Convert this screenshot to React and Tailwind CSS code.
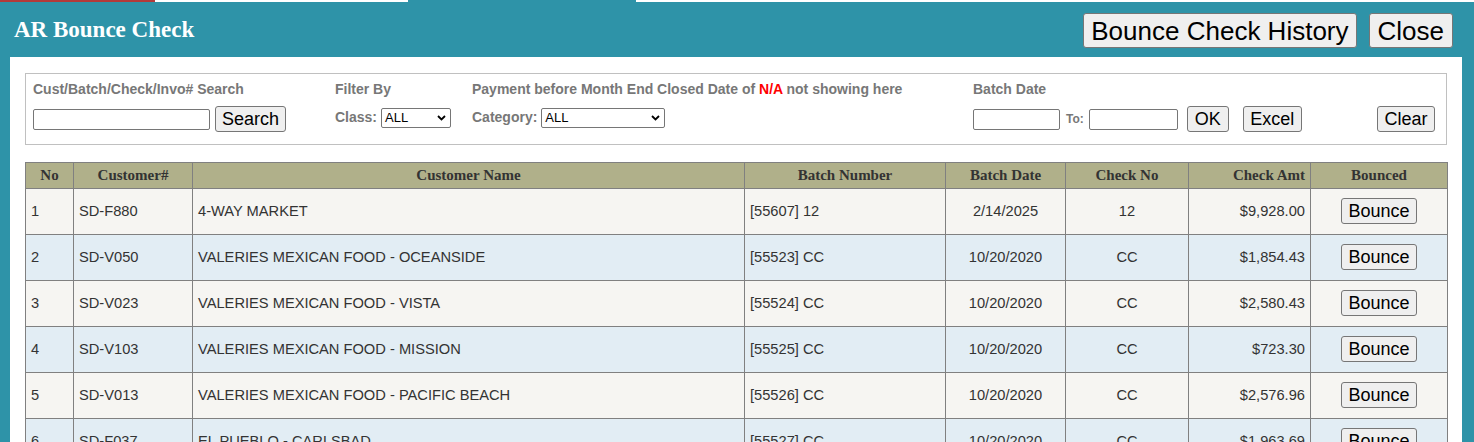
import React from "react";

const rows = [
    { no: 1, cust: "SD-F880", name: "4-WAY MARKET", batch: "[55607] 12", date: "2/14/2025", check: "12", amt: "$9,928.00" },
    { no: 2, cust: "SD-V050", name: "VALERIES MEXICAN FOOD - OCEANSIDE", batch: "[55523] CC", date: "10/20/2020", check: "CC", amt: "$1,854.43" },
    { no: 3, cust: "SD-V023", name: "VALERIES MEXICAN FOOD - VISTA", batch: "[55524] CC", date: "10/20/2020", check: "CC", amt: "$2,580.43" },
    { no: 4, cust: "SD-V103", name: "VALERIES MEXICAN FOOD - MISSION", batch: "[55525] CC", date: "10/20/2020", check: "CC", amt: "$723.30" },
    { no: 5, cust: "SD-V013", name: "VALERIES MEXICAN FOOD - PACIFIC BEACH", batch: "[55526] CC", date: "10/20/2020", check: "CC", amt: "$2,576.96" },
    { no: 6, cust: "SD-F037", name: "EL PUEBLO - CARLSBAD", batch: "[55527] CC", date: "10/20/2020", check: "CC", amt: "$1,963.69" },
];

const btn = "bg-[#efefef] border border-[#767676] rounded-[3px] text-black leading-none";
const label = "text-[14px] font-bold text-[#777]";
const field = "h-[21px] border border-[#767676] rounded-[2px] bg-white";

function Select({ width }) {
    return (
        <div className={`h-[20px] border border-[#767676] rounded-[2px] bg-white flex items-center justify-between pl-[3px] pr-[4px] text-[13px] text-black ${width}`}>
            <span>ALL</span>
            <svg width="9" height="6" viewBox="0 0 9 6"><path d="M1 1l3.5 3.5L8 1" fill="none" stroke="#000" strokeWidth="1.8" /></svg>
        </div>
    );
}

export default function App() {
    const th = "border border-[#808080] font-bold text-[15px] text-[#333] h-[26px] px-[5px]";
    const td = "border border-[#808080] text-[14.67px] text-[#333] h-[46px] px-[5px] pb-[1px]";
    return (
        <div className="w-[1474px] h-[442px] overflow-hidden bg-[#2e93a8] font-['Liberation_Sans',Arial,sans-serif]">
            <div className="flex h-[2px]">
                <div className="w-[155px] bg-[#b33a3a]"></div>
                <div className="w-[253px] bg-white"></div>
                <div className="w-[228px]"></div>
                <div className="flex-1 bg-white"></div>
            </div>
            <div className="h-[55px] flex items-start pl-[14px] pr-[21px]">
                <div className="mt-[14px] text-white font-bold text-[23px] leading-[28px] font-['Liberation_Serif',Georgia,serif]">AR Bounce Check</div>
                <div className="ml-auto mt-[11px] flex gap-[12px]">
                    <button className={`${btn} text-[26px] h-[35px] px-[7px]`}>Bounce Check History</button>
                    <button className={`${btn} text-[26px] h-[35px] px-[8px]`}>Close</button>
                </div>
            </div>
            <div className="ml-[10px] mr-[12px] bg-white pt-[16px] px-[15px] h-[385px]">
                <div className="border border-[#c0c0c0] h-[72px] pt-[5px] pl-[7px] flex">
                    <div className="w-[302px]">
                        <div className={label}>Cust/Batch/Check/Invo# Search</div>
                        <div className="flex items-center mt-[6px] gap-[5px]">
                            <div className={`${field} w-[177px]`}></div>
                            <button className={`${btn} text-[18px] h-[26px] w-[71px]`}>Search</button>
                        </div>
                    </div>
                    <div className="w-[137px]">
                        <div className={label}>Filter By</div>
                        <div className="flex items-center mt-[7px] gap-[4px]">
                            <span className={label}>Class:</span>
                            <Select width="w-[70px]" />
                        </div>
                    </div>
                    <div className="w-[501px]">
                        <div className={label}>Payment before Month End Closed Date of <span className="text-[#f00]">N/A</span> not showing here</div>
                        <div className="flex items-center mt-[7px] gap-[4px]">
                            <span className={label}>Category:</span>
                            <Select width="w-[124px]" />
                        </div>
                    </div>
                    <div className="flex-1 pr-[11px]">
                        <div className={label}>Batch Date</div>
                        <div className="flex items-center mt-[6px]">
                            <div className={`${field} w-[87px]`}></div>
                            <span className="text-[12px] font-bold text-[#777] ml-[6px] mr-[5px]">To:</span>
                            <div className={`${field} w-[89px]`}></div>
                            <button className={`${btn} text-[18px] h-[26px] w-[42px] ml-[9px]`}>OK</button>
                            <button className={`${btn} text-[18px] h-[26px] w-[59px] ml-[14px]`}>Excel</button>
                            <button className={`${btn} text-[18px] h-[26px] w-[58px] ml-auto`}>Clear</button>
                        </div>
                    </div>
                </div>
                <table className="mt-[17px] w-[1422px] border-collapse table-fixed">
                    <colgroup>
                        <col className="w-[48px]" />
                        <col className="w-[119px]" />
                        <col className="w-[552px]" />
                        <col className="w-[201px]" />
                        <col className="w-[120px]" />
                        <col className="w-[123px]" />
                        <col className="w-[122px]" />
                        <col className="w-[137px]" />
                    </colgroup>
                    <thead>
                        <tr className="bg-[#b0b08a] font-['Liberation_Serif',Georgia,serif]">
                            <th className={th}>No</th>
                            <th className={th}>Customer#</th>
                            <th className={th}>Customer Name</th>
                            <th className={th}>Batch Number</th>
                            <th className={th}>Batch Date</th>
                            <th className={th}>Check No</th>
                            <th className={`${th} text-right`}>Check Amt</th>
                            <th className={th}>Bounced</th>
                        </tr>
                    </thead>
                    <tbody>
                        {rows.map((r, i) => (
                            <tr key={r.no} className={i % 2 === 0 ? "bg-[#f6f5f2]" : "bg-[#e2edf4]"}>
                                <td className={td}>{r.no}</td>
                                <td className={td}>{r.cust}</td>
                                <td className={td}>{r.name}</td>
                                <td className={td}>{r.batch}</td>
                                <td className={`${td} text-center`}>{r.date}</td>
                                <td className={`${td} text-center`}>{r.check}</td>
                                <td className={`${td} text-right`}>{r.amt}</td>
                                <td className={`${td} text-center`}>
                                    <button className={`${btn} text-[18px] h-[26px] w-[76px]`}>Bounce</button>
                                </td>
                            </tr>
                        ))}
                    </tbody>
                </table>
            </div>
        </div>
    );
}
